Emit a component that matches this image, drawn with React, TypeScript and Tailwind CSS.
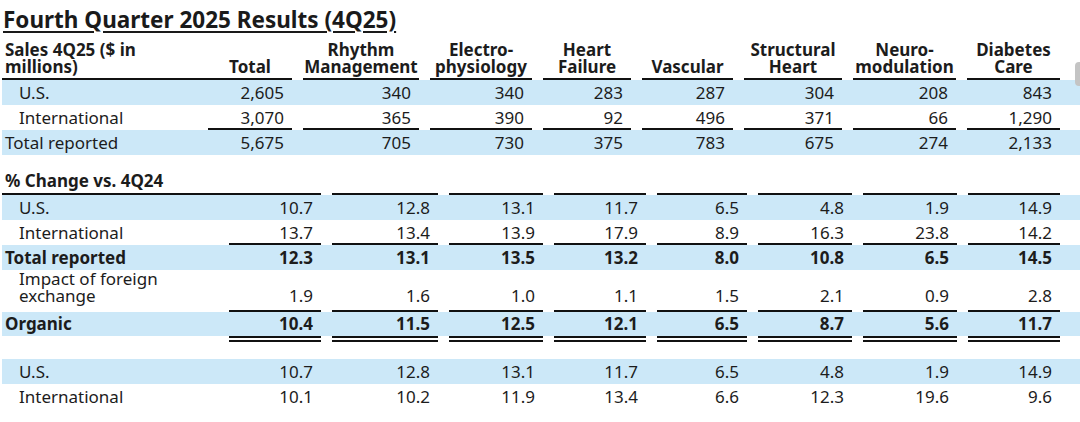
import type { ReactNode } from "react"
import clsx from "clsx"

type Rule = "none" | "single" | "double"

const RULE: Record<Rule, string> = {
  none: "",
  single: "shadow-[inset_0_-2px_0_#111]",
  double: "shadow-[inset_0_-2px_0_#111,inset_0_-4px_0_#fff,inset_0_-6px_0_#111]",
}

// column layouts differ between the sales block and the % change blocks
const SALES_GRID = "grid-cols-[206px_84px_127px_113px_99px_102px_109px_114px_104px]"
const PCT_GRID = "grid-cols-[227px_92px_117px_105px_103px_101px_105px_105px_103px]"

const BLUE = "bg-[#cce8f8]"

interface RowProps {
  grid: string
  label: ReactNode
  values: ReactNode[]
  className?: string
  labelClass?: string
  cellClass?: string
  rule?: Rule
  labelRule?: Rule
}

function Row({
  grid,
  label,
  values,
  className,
  labelClass,
  cellClass,
  rule = "none",
  labelRule = "none",
}: RowProps) {
  return (
    <div className={clsx("grid", grid, className)}>
      <div className={clsx("flex h-full", labelClass, RULE[labelRule])}>{label}</div>
      {values.map((v, i) => (
        <div key={i} className={clsx("h-full", i > 0 && "pl-[11px]")}>
          <div className={clsx("flex h-full", cellClass, RULE[rule])}>{v}</div>
        </div>
      ))}
    </div>
  )
}

const dataLabel = "items-start leading-[25px]"
const dataCell = "justify-end pr-[8px] leading-[25px]"

function DataRow({
  grid,
  label,
  values,
  blue,
  bold,
  indent,
  rule,
}: {
  grid: string
  label: string
  values: string[]
  blue?: boolean
  bold?: boolean
  indent?: boolean
  rule?: Rule
}) {
  return (
    <Row
      grid={grid}
      label={label}
      values={values}
      rule={rule}
      className={clsx("h-[25px]", blue && BLUE, bold && "font-bold")}
      labelClass={clsx(dataLabel, indent ? "pl-[17px]" : "pl-[3px]")}
      cellClass={dataCell}
    />
  )
}

const salesHeaders = [
  ["Total"],
  ["Rhythm", "Management"],
  ["Electro-", "physiology"],
  ["Heart", "Failure"],
  ["Vascular"],
  ["Structural", "Heart"],
  ["Neuro-", "modulation"],
  ["Diabetes", "Care"],
]

const blank = ["", "", "", "", "", "", "", ""]

export default function App() {
  return (
    <div className="relative min-h-[422px] bg-white pl-[2px] font-['Noto_Sans',sans-serif] text-[17px] text-[#1c1c1c]">
      <div className="h-[42px] pt-[6px] pl-[1px]">
        <h1 className="text-[22.5px] font-bold leading-[27px] text-[#1a1a1a] underline decoration-2 underline-offset-[3px]">
          Fourth Quarter 2025 Results (4Q25)
        </h1>
      </div>

      {/* Sales block */}
      <Row
        grid={SALES_GRID}
        className="h-[38px] font-bold"
        labelClass="flex-col justify-end pl-[3px] pb-[5px] leading-[16.5px]"
        labelRule="single"
        rule="single"
        cellClass="flex-col items-center justify-end pb-[5px] leading-[16.5px]"
        label={
          <>
            <span>Sales 4Q25 ($ in</span>
            <span>millions)</span>
          </>
        }
        values={salesHeaders.map((lines) => lines.map((l) => <span key={l}>{l}</span>))}
      />
      <DataRow
        grid={SALES_GRID}
        label="U.S."
        indent
        blue
        values={["2,605", "340", "340", "283", "287", "304", "208", "843"]}
      />
      <DataRow
        grid={SALES_GRID}
        label="International"
        indent
        rule="single"
        values={["3,070", "365", "390", "92", "496", "371", "66", "1,290"]}
      />
      <DataRow
        grid={SALES_GRID}
        label="Total reported"
        blue
        values={["5,675", "705", "730", "375", "783", "675", "274", "2,133"]}
      />

      {/* % change block */}
      <Row
        grid={PCT_GRID}
        className="h-[40px] font-bold"
        labelClass="items-end pl-[3px] pb-[2px] leading-[24px]"
        labelRule="single"
        rule="single"
        label="% Change vs. 4Q24"
        values={blank}
      />
      <DataRow
        grid={PCT_GRID}
        label="U.S."
        indent
        blue
        values={["10.7", "12.8", "13.1", "11.7", "6.5", "4.8", "1.9", "14.9"]}
      />
      <DataRow
        grid={PCT_GRID}
        label="International"
        indent
        rule="single"
        values={["13.7", "13.4", "13.9", "17.9", "8.9", "16.3", "23.8", "14.2"]}
      />
      <DataRow
        grid={PCT_GRID}
        label="Total reported"
        blue
        bold
        values={["12.3", "13.1", "13.5", "13.2", "8.0", "10.8", "6.5", "14.5"]}
      />
      <Row
        grid={PCT_GRID}
        className="h-[42px]"
        labelClass="flex-col justify-end pl-[17px] pb-[8px] leading-[16.5px]"
        cellClass="items-end justify-end pr-[8px] pb-[8px] leading-[16.5px]"
        rule="single"
        label={
          <>
            <span>Impact of foreign</span>
            <span>exchange</span>
          </>
        }
        values={["1.9", "1.6", "1.0", "1.1", "1.5", "2.1", "0.9", "2.8"]}
      />
      <Row
        grid={PCT_GRID}
        className="h-[30px] bg-[linear-gradient(to_bottom,#cce8f8_24px,transparent_24px)] font-bold"
        labelClass="items-start pl-[3px] leading-[24px]"
        cellClass="items-start justify-end pr-[8px] leading-[24px]"
        rule="double"
        label="Organic"
        values={["10.4", "11.5", "12.5", "12.1", "6.5", "8.7", "5.6", "11.7"]}
      />

      <div className="h-[17px]" />

      <DataRow
        grid={PCT_GRID}
        label="U.S."
        indent
        blue
        values={["10.7", "12.8", "13.1", "11.7", "6.5", "4.8", "1.9", "14.9"]}
      />
      <DataRow
        grid={PCT_GRID}
        label="International"
        indent
        values={["10.1", "10.2", "11.9", "13.4", "6.6", "12.3", "19.6", "9.6"]}
      />

      {/* scrollbar thumb peeking in at the right edge */}
      <div className="absolute left-[1075px] top-[62px] h-[24px] w-[10px] rounded-[4px] bg-[#c4c4c4]" />
    </div>
  )
}
